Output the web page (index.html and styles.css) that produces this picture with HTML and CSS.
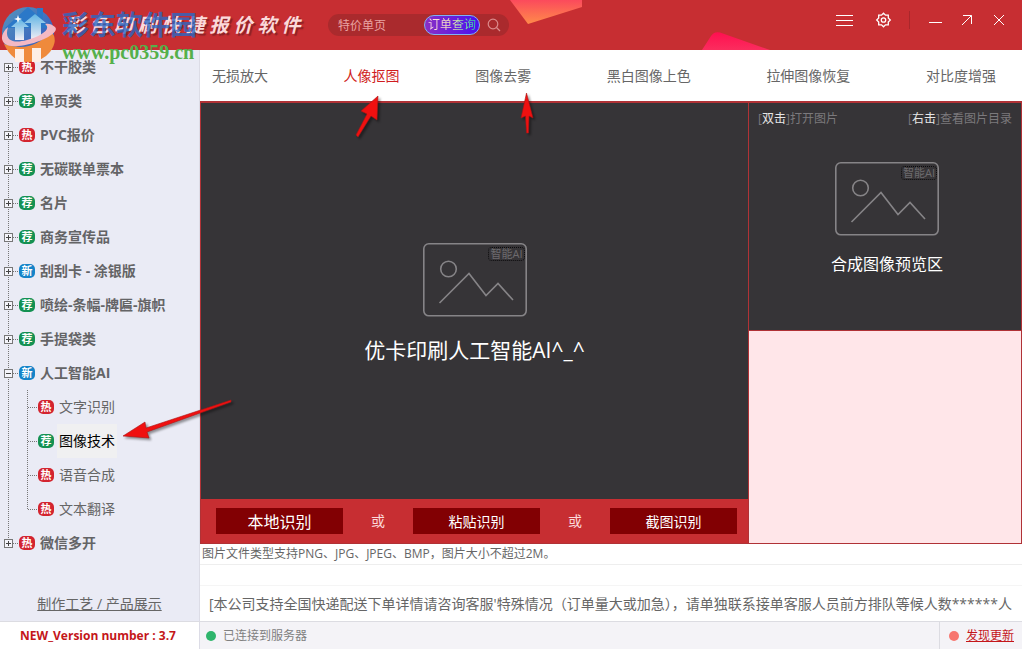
FILE: index.html
```html
<!DOCTYPE html>
<html lang="zh-CN">

<head>
  <meta charset="UTF-8" />
  <meta name="viewport" content="width=device-width, initial-scale=1.0" />
  <title>彩色印刷快捷报价软件</title>
  <link rel="stylesheet" href="styles.css">
</head>

<body>
  <!-- shared picture placeholder -->
  <svg class="defs" width="0" height="0" aria-hidden="true">
    <symbol id="picture" viewBox="0 0 104 74">
      <g fill="none" stroke="#868487" stroke-width="1.6">
        <rect x="0.8" y="0.8" width="102.4" height="72" rx="5" />
        <circle cx="25.500" cy="26" r="7.8" />
        <path d="M16.500 60 46 30.500 63 52.500 75 40.500 90 57" />
      </g>
    </symbol>
  </svg>

  <!-- HEADER -->
  <header class="header">
    <svg class="decor decorTop" width="72" height="24" viewBox="0 0 72 24">
      <defs>
        <linearGradient id="orange" x1="0" y1="0" x2="0" y2="1">
          <stop offset="0" stop-color="#fb4a5c" />
          <stop offset="1" stop-color="#ff8b4a" />
        </linearGradient>
      </defs>
      <path d="M0 0H72V7L18 24Z" fill="url(#orange)" />
    </svg>
    <svg class="decor decorBottom" width="68" height="19" viewBox="0 0 68 19">
      <defs>
        <linearGradient id="pink" x1="0" y1="0" x2="0" y2="1">
          <stop offset="0" stop-color="#ff0f50" />
          <stop offset="1" stop-color="#fb2d5e" />
        </linearGradient>
      </defs>
      <path d="M0 19 9 5Q12 0 18 1.500L68 19Z" fill="url(#pink)" />
    </svg>

    <h1 class="title">彩 色 印 刷 快 捷 报 价 软 件</h1>

    <form class="search">
      <input type="text" class="searchInput" aria-label="搜索" value="特价单页" />
      <button type="button" class="orderBtn"><span>订单查询</span></button>
      <button type="button" class="iconBtn searchBtn" aria-label="搜索">
        <svg width="14" height="14" viewBox="0 0 14 14" fill="none" stroke="#dc8a8b" stroke-width="1.2">
          <circle cx="6" cy="6" r="4.800" />
          <path d="M9.500 9.500 13 13" />
        </svg>
      </button>
    </form>

    <div class="windowBtns">
      <button type="button" class="iconBtn" aria-label="菜单">
        <svg width="20" height="20" viewBox="0 0 20 20" stroke="#fff"><path d="M2 5.500H19M2 10.500H19M2 15.500H19" /></svg>
      </button>
      <button type="button" class="iconBtn" aria-label="设置">
        <svg width="20" height="20" viewBox="0 0 20 20" fill="none" stroke="#fff" stroke-width="1.300">
          <path d="M9.500 3.200 11.500 5.200 14.300 5.200 14.300 8 16.300 10 14.300 12 14.300 14.800 11.500 14.800 9.500 16.800 7.500 14.800 4.700 14.800 4.700 12 2.700 10 4.700 8 4.700 5.200 7.500 5.200Z" />
          <circle cx="9.500" cy="10" r="2.200" />
        </svg>
      </button>
      <span class="divider"></span>
      <button type="button" class="iconBtn" aria-label="最小化">
        <svg width="20" height="20" viewBox="0 0 20 20" stroke="#fff"><path d="M4 12.500H17" /></svg>
      </button>
      <button type="button" class="iconBtn" aria-label="还原">
        <svg width="20" height="20" viewBox="0 0 20 20" fill="none" stroke="#fff"><path d="M6 5.500H14.500V14M5 15 14.500 5.500" /></svg>
      </button>
      <button type="button" class="iconBtn" aria-label="关闭">
        <svg width="20" height="20" viewBox="0 0 20 20" stroke="#fff"><path d="M5 5 15 15M15 5 5 15" /></svg>
      </button>
    </div>
  </header>

  <div class="main">
    <!-- SIDEBAR -->
    <aside class="sidebar">
      <ul class="tree">
        <li><div class="row"><button type="button" class="toggle" aria-label="展开"></button><span class="badge hot">热</span><a href="#">不干胶类</a></div></li>
        <li><div class="row"><button type="button" class="toggle" aria-label="展开"></button><span class="badge rec">荐</span><a href="#">单页类</a></div></li>
        <li><div class="row"><button type="button" class="toggle" aria-label="展开"></button><span class="badge hot">热</span><a href="#">PVC报价</a></div></li>
        <li><div class="row"><button type="button" class="toggle" aria-label="展开"></button><span class="badge rec">荐</span><a href="#">无碳联单票本</a></div></li>
        <li><div class="row"><button type="button" class="toggle" aria-label="展开"></button><span class="badge rec">荐</span><a href="#">名片</a></div></li>
        <li><div class="row"><button type="button" class="toggle" aria-label="展开"></button><span class="badge rec">荐</span><a href="#">商务宣传品</a></div></li>
        <li><div class="row"><button type="button" class="toggle" aria-label="展开"></button><span class="badge new">新</span><a href="#">刮刮卡 - 涂银版</a></div></li>
        <li><div class="row"><button type="button" class="toggle" aria-label="展开"></button><span class="badge rec">荐</span><a href="#">喷绘-条幅-牌匾-旗帜</a></div></li>
        <li><div class="row"><button type="button" class="toggle" aria-label="展开"></button><span class="badge rec">荐</span><a href="#">手提袋类</a></div></li>
        <li>
          <div class="row"><button type="button" class="toggle open" aria-label="收起"></button><span class="badge new">新</span><a href="#">人工智能AI</a></div>
          <ul class="subtree">
            <li class="row"><span class="badge hot">热</span><a href="#">文字识别</a></li>
            <li class="row"><span class="badge rec">荐</span><a href="#" class="active">图像技术</a></li>
            <li class="row"><span class="badge hot">热</span><a href="#">语音合成</a></li>
            <li class="row"><span class="badge hot">热</span><a href="#">文本翻译</a></li>
          </ul>
        </li>
        <li><div class="row"><button type="button" class="toggle" aria-label="展开"></button><span class="badge hot">热</span><a href="#">微信多开</a></div></li>
      </ul>
      <a href="#" class="craftLink">制作工艺 / 产品展示</a>
    </aside>

    <!-- CONTENT -->
    <main class="content">
      <nav class="tabs">
        <a href="#">无损放大</a>
        <a href="#" class="active">人像抠图</a>
        <a href="#">图像去雾</a>
        <a href="#">黑白图像上色</a>
        <a href="#">拉伸图像恢复</a>
        <a href="#">对比度增强</a>
      </nav>

      <div class="workspace">
        <section class="source">
          <div class="drop">
            <div class="picture">
              <svg width="104" height="74"><use href="#picture" /></svg>
              <span class="aiTag">智能AI</span>
            </div>
            <p class="dropText">优卡印刷人工智能AI^_^</p>
          </div>
          <div class="actions">
            <button type="button" class="actionBtn large">本地识别</button>
            <span>或</span>
            <button type="button" class="actionBtn">粘贴识别</button>
            <span>或</span>
            <button type="button" class="actionBtn">截图识别</button>
          </div>
        </section>

        <section class="result">
          <div class="preview">
            <div class="tips">
              <span>[<b>双击</b>]打开图片</span>
              <span>[<b>右击</b>]查看图片目录</span>
            </div>
            <div class="picture">
              <svg width="104" height="74"><use href="#picture" /></svg>
              <span class="aiTag">智能AI</span>
            </div>
            <p class="previewText">合成图像预览区</p>
          </div>
          <div class="output"></div>
        </section>
      </div>

      <p class="hint">图片文件类型支持PNG、JPG、JPEG、BMP，图片大小不超过2M。</p>
      <div class="spacer"></div>
      <p class="notice">[本公司支持全国快递配送下单详情请咨询客服'特殊情况（订单量大或加急），请单独联系接单客服人员前方排队等候人数******人</p>
    </main>
  </div>

  <!-- STATUS BAR -->
  <footer class="status">
    <div class="version">NEW_Version number : 3.7</div>
    <div class="server"><span class="dot green"></span>已连接到服务器</div>
    <div class="update"><span class="dot coral"></span><a href="#">发现更新</a></div>
  </footer>

  <!-- site mark over the top left corner -->
  <div class="mark">
    <svg width="60" height="62" viewBox="0 0 60 62">
      <defs>
        <linearGradient id="ball" x1="0" y1="0" x2="1" y2="1">
          <stop offset="0" stop-color="#5796bd" />
          <stop offset="1" stop-color="#2e4fc0" />
        </linearGradient>
        <linearGradient id="tower" x1="0" y1="0" x2="0" y2="1">
          <stop offset="0" stop-color="#5fb4e4" />
          <stop offset="1" stop-color="#f3eef5" />
        </linearGradient>
      </defs>
      <circle cx="28" cy="33" r="26" fill="url(#ball)" />
      <path d="M4 44Q32 54 51 31 59 40 50 52 42 62 28 62 12 62 4 44Z" fill="#ef8a3c" />
      <path d="M5 28 28 7 37 15V8H43V21L50 28Z" fill="#2b78c8" />
      <path d="M11 27 20 19 29 27H24V40H15V27Z" fill="url(#tower)" />
      <path d="M24 23 35 14 46 23H41V40H31V23Z" fill="url(#tower)" />
      <path d="M15 49H24V62H15ZM32 48H41V62H32Z" fill="#fdeee6" />
      <path d="M8 27C-4 38 3 48 18 46 36 45 61 33 55 27 52 24 48 23 45 24 52 29 41 36 27 40 12 44 4 40 8 27Z" fill="#f3b9c4" />
      <path d="M18 15 19 18 22 19 19 20 18 23 17 20 14 19 17 18Z" fill="#fff" />
    </svg>
    <div class="markText">
      <span class="markName">彩东软件园</span>
      <span class="markUrl">www.pc0359.cn</span>
    </div>
  </div>

  <!-- pointer arrows -->
  <svg class="arrows" width="560" height="460" viewBox="0 0 560 460" aria-hidden="true">
    <g fill="#f01010" stroke="#a81414" stroke-width="0.600">
      <path d="M378 96 377 120 371 116 358 137 356 135 367 114 361 111Z" />
      <path d="M526.500 93 533 118 529 116 528.500 133H526.500L525.500 116 521 118Z" />
      <path d="M123 436 145 422 146 428 231 400V402L147 432 149 438Z" />
    </g>
  </svg>
</body>

</html>
```
FILE: styles.css
```css
* {
  box-sizing: border-box;
}

body {
  margin: 0;
  min-height: 100vh;
  display: flex;
  flex-direction: column;
  font-family: "Open Sans", "Noto Sans CJK SC", sans-serif;
  font-size: 14px;
  line-height: 20px;
  color: #666;
  background-color: #fff;
  position: relative;
}

a {
  color: inherit;
  text-decoration: none;
}

button {
  font-family: inherit;
  border: none;
  padding: 0;
  cursor: pointer;
}

p,
ul {
  margin: 0;
  padding: 0;
  list-style: none;
}

.defs {
  position: absolute;
}

/* header */
.header {
  position: relative;
  height: 50px;
  display: flex;
  align-items: center;
  background-color: #c72e32;
}

.decor {
  position: absolute;
}

.decorTop {
  left: 510px;
  top: 0;
}

.decorBottom {
  left: 702px;
  bottom: 0;
}

.title {
  width: 262px;
  margin: 0 0 0 66px;
  font-size: 19px;
  font-weight: bold;
  font-style: italic;
  white-space: nowrap;
  color: #fbd9da;
  text-shadow: 2px 2px 1px #8c2226;
}

.search {
  display: flex;
  align-items: center;
  width: 181px;
  height: 22px;
  padding: 0 8px 0 10px;
  border-radius: 11px;
  background-color: #aa2a2d;
}

.searchInput {
  flex: 1;
  min-width: 0;
  padding: 0;
  border: none;
  outline: none;
  background: none;
  font-family: inherit;
  font-size: 12px;
  color: #e9a3a3;
}

.orderBtn {
  width: 56px;
  height: 20px;
  border: 1px solid #7fb2f5;
  border-radius: 10px;
  background: linear-gradient(90deg, #8a2fc4, #4a10f0);
  font-size: 12px;
  line-height: 18px;
}

.orderBtn span {
  background: linear-gradient(90deg, #ffd9ec, #f4e6b0, #27d4a0);
  background-clip: text;
  -webkit-background-clip: text;
  color: transparent;
}

.iconBtn {
  display: flex;
  background: none;
}

.searchBtn {
  margin-left: 7px;
}

.windowBtns {
  margin-left: auto;
  padding: 0 13px 10px 0;
  display: flex;
  align-items: center;
  gap: 12px;
}

.windowBtns .iconBtn:first-child {
  margin-right: 8px;
}

.divider {
  width: 1px;
  height: 18px;
  margin: 0 3px;
  background-color: #a9272b;
}

/* layout */
.main {
  flex: 1;
  display: flex;
}

.sidebar {
  width: 200px;
  display: flex;
  flex-direction: column;
  background-color: #eaebf5;
  border-right: 1px solid #dcdce6;
}

.content {
  flex: 1;
  min-width: 0;
  display: flex;
  flex-direction: column;
}

/* tree */
.tree {
  font-weight: bold;
  color: #646466;
  background: repeating-linear-gradient(#777 0 1px, transparent 1px 2px) 8px 17px / 1px 476px no-repeat;
}

.row {
  display: flex;
  align-items: center;
  height: 34px;
  padding-left: 4px;
}

.toggle {
  width: 9px;
  height: 9px;
  border: 1px solid #777;
  background:
    linear-gradient(#444, #444) center / 5px 1px no-repeat,
    linear-gradient(#444, #444) center / 1px 5px no-repeat,
    #f4f4fa;
}

.toggle.open {
  background: linear-gradient(#444, #444) center / 5px 1px no-repeat, #f4f4fa;
}

.row::before {
  content: "";
  order: 1;
  width: 6px;
  height: 1px;
  background: repeating-linear-gradient(90deg, #777 0 1px, transparent 1px 2px);
}

.badge {
  order: 2;
  width: 16px;
  height: 14px;
  margin-right: 5px;
  border-radius: 5px;
  font-size: 11px;
  font-weight: bold;
  line-height: 13px;
  text-align: center;
  color: #fff;
}

.row a {
  order: 3;
}

.hot {
  background-color: #d3242f;
}

.rec {
  background-color: #149152;
}

.new {
  background-color: #1583c8;
}

.subtree {
  font-weight: normal;
  color: #666;
  background: repeating-linear-gradient(#777 0 1px, transparent 1px 2px) 27px 0 / 1px 119px no-repeat;
}

.subtree .row {
  padding-left: 28px;
}

.subtree .row::before {
  width: 10px;
}

.subtree .badge {
  margin-right: 3px;
}

.subtree a {
  padding: 7px 2px;
}

.subtree a.active {
  color: #000;
  background-color: #f0f0f1;
}

.craftLink {
  margin: auto auto 0;
  line-height: 34px;
  text-decoration: underline;
}

/* tabs */
.tabs {
  display: flex;
  justify-content: space-between;
  align-items: center;
  height: 51px;
  padding: 0 26px 0 12px;
}

.tabs .active {
  color: #d01c20;
}

/* workspace */
.workspace {
  flex: 1;
  display: grid;
  grid-template-columns: 1fr 272px;
  border: 1px solid #b03236;
  border-top-width: 2px;
}

.source {
  display: flex;
  flex-direction: column;
  border-right: 1px solid #b03236;
}

.drop {
  flex: 1;
  display: flex;
  flex-direction: column;
  align-items: center;
  justify-content: center;
  gap: 18px;
  padding-top: 6px;
  background-color: #363437;
}

.picture {
  position: relative;
  display: flex;
}

.aiTag {
  position: absolute;
  top: 4px;
  right: 2px;
  padding: 0 1px;
  border: 1px dotted #0c0b0d;
  border-radius: 4px;
  font-size: 11px;
  line-height: 12px;
  color: #6d6b6e;
}

.dropText {
  font-size: 21px;
  line-height: 30px;
  color: #fff;
}

.actions {
  display: flex;
  align-items: center;
  justify-content: space-between;
  height: 44px;
  padding: 0 11px 0 15px;
  background-color: #c72e32;
  color: #fbdada;
}

.actionBtn {
  width: 127px;
  height: 26px;
  background-color: #820003;
  font-size: 14px;
  color: #fff;
}

.actionBtn.large {
  font-size: 16px;
}

.result {
  display: flex;
  flex-direction: column;
}

.preview {
  height: 228px;
  display: flex;
  flex-direction: column;
  align-items: center;
  padding-left: 4px;
  border-bottom: 1px solid #b03236;
  background-color: #363437;
}

.tips {
  align-self: stretch;
  display: flex;
  justify-content: space-between;
  padding: 6px 9px 33px 5px;
  font-size: 12px;
  color: #7b797c;
}

.tips b {
  font-weight: normal;
  color: #e6e6e6;
}

.previewText {
  margin-top: 18px;
  font-size: 16px;
  color: #fff;
}

.output {
  flex: 1;
  background-color: #ffe6e9;
}

.hint {
  padding-left: 2px;
  font-size: 12px;
  border-bottom: 1px solid #eee;
}

.spacer {
  height: 21px;
  border-bottom: 1px solid #f5f5f5;
}

.notice {
  padding: 0 9px;
  line-height: 35px;
  white-space: nowrap;
  overflow: hidden;
}

/* status bar */
.status {
  display: flex;
  align-items: center;
  height: 28px;
  border-top: 1px solid #dcdce2;
  background-color: #f4f3f7;
  font-size: 12px;
  line-height: 27px;
}

.version {
  width: 200px;
  padding-right: 3px;
  border-right: 1px solid #dcdce6;
  background-color: #fff;
  font-weight: bold;
  text-align: center;
  color: #c4161a;
}

.server {
  flex: 1;
  display: flex;
  align-items: center;
  gap: 7px;
  padding-left: 6px;
  color: #808080;
}

.update {
  display: flex;
  align-items: center;
  gap: 7px;
  padding: 0 8px 0 9px;
  border-left: 1px solid #dcdce2;
}

.update a {
  color: #c4161a;
  text-decoration: underline;
}

.dot {
  width: 10px;
  height: 10px;
  border-radius: 50%;
}

.green {
  background-color: #2fb56c;
}

.coral {
  background-color: #f7766f;
}

/* overlays */
.mark {
  position: absolute;
  top: 0;
  left: 0;
  display: flex;
  gap: 2px;
  pointer-events: none;
}

.markText {
  display: flex;
  flex-direction: column;
  padding-top: 8px;
}

.markName {
  font-size: 27px;
  font-weight: bold;
  line-height: 34px;
  color: rgba(40, 105, 200, 0.8);
}

.markUrl {
  font-family: "Liberation Serif", serif;
  font-size: 20px;
  font-weight: bold;
  color: #55b04b;
}

.arrows {
  position: absolute;
  top: 0;
  left: 0;
  pointer-events: none;
  filter: drop-shadow(2px 2px 1px rgba(0, 0, 0, 0.4));
}
```
